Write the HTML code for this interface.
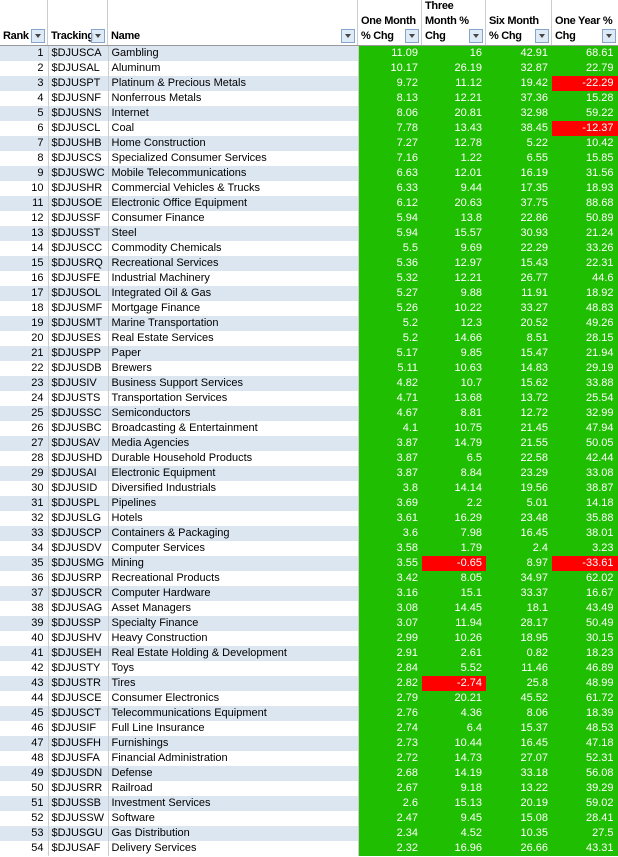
<!DOCTYPE html>
<html><head><style>
*{margin:0;padding:0;box-sizing:border-box}
body{width:618px;height:857px;background:#fff;font-family:"Liberation Sans",Arial,sans-serif;font-size:11px;overflow:hidden;position:relative}
.hd{position:absolute;top:0;left:0;width:618px;height:46px;border-bottom:1px solid #999;background:#fff}
.hc{position:absolute;top:0;height:45px;border-right:1px solid #ccc;font-weight:bold;font-size:11px;line-height:15px;color:#000;letter-spacing:-0.3px}
.hc span{position:absolute;left:3px;bottom:1px;white-space:nowrap}
.dd{position:absolute;right:2px;bottom:2px;width:14px;height:14px;border:1px solid #7a9cc8;background:#dbe8f5;opacity:.9}
.dd:after{content:"";position:absolute;left:3px;top:4px;border-left:3.5px solid transparent;border-right:3.5px solid transparent;border-top:4px solid #333}
table{position:absolute;top:46px;left:0;border-collapse:collapse;table-layout:fixed;width:618px}
td{height:15px;line-height:15px;padding:0 3px;white-space:nowrap;overflow:hidden}
td.r{text-align:right;padding-right:4px;border-right:1px solid #ccc}
td.t{border-right:1px solid #ccc}
td.n{border-right:1px solid #ccc}
td.g{background:#20be00;color:#fff;text-align:right;padding-right:4px}
td.g.e{border-right:1px solid #fff}
td.g b{font-weight:normal;display:block;margin:0 -4px 0 -3px;padding-right:4px}
td.g b.x{background:#f00}
tr:nth-child(odd) td.r,tr:nth-child(odd) td.t,tr:nth-child(odd) td.n{background:#dce6f1}
</style></head><body>
<div class="hd">
<div class="hc" style="left:0;width:48px"><span>Rank</span><div class="dd"></div></div>
<div class="hc" style="left:48px;width:60px"><span>Tracking</span><div class="dd"></div></div>
<div class="hc" style="left:108px;width:250px"><span>Name</span><div class="dd"></div></div>
<div class="hc" style="left:358px;width:64px"><span>One Month<br>% Chg</span><div class="dd" style="background:#dbe8f5"></div></div>
<div class="hc" style="left:422px;width:64px"><span>Three<br>Month %<br>Chg</span><div class="dd"></div></div>
<div class="hc" style="left:486px;width:66px"><span>Six Month<br>% Chg</span><div class="dd"></div></div>
<div class="hc" style="left:552px;width:66px;border-right:0"><span>One Year %<br>Chg</span><div class="dd"></div></div>
</div>
<table>
<colgroup><col style="width:48px"><col style="width:60px"><col style="width:250px"><col style="width:64px"><col style="width:64px"><col style="width:66px"><col style="width:66px"></colgroup>
<tr><td class="r">1</td><td class="t">$DJUSCA</td><td class="n">Gambling</td><td class="g">11.09</td><td class="g">16</td><td class="g">42.91</td><td class="g e">68.61</td></tr>
<tr><td class="r">2</td><td class="t">$DJUSAL</td><td class="n">Aluminum</td><td class="g">10.17</td><td class="g">26.19</td><td class="g">32.87</td><td class="g e">22.79</td></tr>
<tr><td class="r">3</td><td class="t">$DJUSPT</td><td class="n">Platinum &amp; Precious Metals</td><td class="g">9.72</td><td class="g">11.12</td><td class="g">19.42</td><td class="g e"><b class="x">-22.29</b></td></tr>
<tr><td class="r">4</td><td class="t">$DJUSNF</td><td class="n">Nonferrous Metals</td><td class="g">8.13</td><td class="g">12.21</td><td class="g">37.36</td><td class="g e">15.28</td></tr>
<tr><td class="r">5</td><td class="t">$DJUSNS</td><td class="n">Internet</td><td class="g">8.06</td><td class="g">20.81</td><td class="g">32.98</td><td class="g e">59.22</td></tr>
<tr><td class="r">6</td><td class="t">$DJUSCL</td><td class="n">Coal</td><td class="g">7.78</td><td class="g">13.43</td><td class="g">38.45</td><td class="g e"><b class="x">-12.37</b></td></tr>
<tr><td class="r">7</td><td class="t">$DJUSHB</td><td class="n">Home Construction</td><td class="g">7.27</td><td class="g">12.78</td><td class="g">5.22</td><td class="g e">10.42</td></tr>
<tr><td class="r">8</td><td class="t">$DJUSCS</td><td class="n">Specialized Consumer Services</td><td class="g">7.16</td><td class="g">1.22</td><td class="g">6.55</td><td class="g e">15.85</td></tr>
<tr><td class="r">9</td><td class="t">$DJUSWC</td><td class="n">Mobile Telecommunications</td><td class="g">6.63</td><td class="g">12.01</td><td class="g">16.19</td><td class="g e">31.56</td></tr>
<tr><td class="r">10</td><td class="t">$DJUSHR</td><td class="n">Commercial Vehicles &amp; Trucks</td><td class="g">6.33</td><td class="g">9.44</td><td class="g">17.35</td><td class="g e">18.93</td></tr>
<tr><td class="r">11</td><td class="t">$DJUSOE</td><td class="n">Electronic Office Equipment</td><td class="g">6.12</td><td class="g">20.63</td><td class="g">37.75</td><td class="g e">88.68</td></tr>
<tr><td class="r">12</td><td class="t">$DJUSSF</td><td class="n">Consumer Finance</td><td class="g">5.94</td><td class="g">13.8</td><td class="g">22.86</td><td class="g e">50.89</td></tr>
<tr><td class="r">13</td><td class="t">$DJUSST</td><td class="n">Steel</td><td class="g">5.94</td><td class="g">15.57</td><td class="g">30.93</td><td class="g e">21.24</td></tr>
<tr><td class="r">14</td><td class="t">$DJUSCC</td><td class="n">Commodity Chemicals</td><td class="g">5.5</td><td class="g">9.69</td><td class="g">22.29</td><td class="g e">33.26</td></tr>
<tr><td class="r">15</td><td class="t">$DJUSRQ</td><td class="n">Recreational Services</td><td class="g">5.36</td><td class="g">12.97</td><td class="g">15.43</td><td class="g e">22.31</td></tr>
<tr><td class="r">16</td><td class="t">$DJUSFE</td><td class="n">Industrial Machinery</td><td class="g">5.32</td><td class="g">12.21</td><td class="g">26.77</td><td class="g e">44.6</td></tr>
<tr><td class="r">17</td><td class="t">$DJUSOL</td><td class="n">Integrated Oil &amp; Gas</td><td class="g">5.27</td><td class="g">9.88</td><td class="g">11.91</td><td class="g e">18.92</td></tr>
<tr><td class="r">18</td><td class="t">$DJUSMF</td><td class="n">Mortgage Finance</td><td class="g">5.26</td><td class="g">10.22</td><td class="g">33.27</td><td class="g e">48.83</td></tr>
<tr><td class="r">19</td><td class="t">$DJUSMT</td><td class="n">Marine Transportation</td><td class="g">5.2</td><td class="g">12.3</td><td class="g">20.52</td><td class="g e">49.26</td></tr>
<tr><td class="r">20</td><td class="t">$DJUSES</td><td class="n">Real Estate Services</td><td class="g">5.2</td><td class="g">14.66</td><td class="g">8.51</td><td class="g e">28.15</td></tr>
<tr><td class="r">21</td><td class="t">$DJUSPP</td><td class="n">Paper</td><td class="g">5.17</td><td class="g">9.85</td><td class="g">15.47</td><td class="g e">21.94</td></tr>
<tr><td class="r">22</td><td class="t">$DJUSDB</td><td class="n">Brewers</td><td class="g">5.11</td><td class="g">10.63</td><td class="g">14.83</td><td class="g e">29.19</td></tr>
<tr><td class="r">23</td><td class="t">$DJUSIV</td><td class="n">Business Support Services</td><td class="g">4.82</td><td class="g">10.7</td><td class="g">15.62</td><td class="g e">33.88</td></tr>
<tr><td class="r">24</td><td class="t">$DJUSTS</td><td class="n">Transportation Services</td><td class="g">4.71</td><td class="g">13.68</td><td class="g">13.72</td><td class="g e">25.54</td></tr>
<tr><td class="r">25</td><td class="t">$DJUSSC</td><td class="n">Semiconductors</td><td class="g">4.67</td><td class="g">8.81</td><td class="g">12.72</td><td class="g e">32.99</td></tr>
<tr><td class="r">26</td><td class="t">$DJUSBC</td><td class="n">Broadcasting &amp; Entertainment</td><td class="g">4.1</td><td class="g">10.75</td><td class="g">21.45</td><td class="g e">47.94</td></tr>
<tr><td class="r">27</td><td class="t">$DJUSAV</td><td class="n">Media Agencies</td><td class="g">3.87</td><td class="g">14.79</td><td class="g">21.55</td><td class="g e">50.05</td></tr>
<tr><td class="r">28</td><td class="t">$DJUSHD</td><td class="n">Durable Household Products</td><td class="g">3.87</td><td class="g">6.5</td><td class="g">22.58</td><td class="g e">42.44</td></tr>
<tr><td class="r">29</td><td class="t">$DJUSAI</td><td class="n">Electronic Equipment</td><td class="g">3.87</td><td class="g">8.84</td><td class="g">23.29</td><td class="g e">33.08</td></tr>
<tr><td class="r">30</td><td class="t">$DJUSID</td><td class="n">Diversified Industrials</td><td class="g">3.8</td><td class="g">14.14</td><td class="g">19.56</td><td class="g e">38.87</td></tr>
<tr><td class="r">31</td><td class="t">$DJUSPL</td><td class="n">Pipelines</td><td class="g">3.69</td><td class="g">2.2</td><td class="g">5.01</td><td class="g e">14.18</td></tr>
<tr><td class="r">32</td><td class="t">$DJUSLG</td><td class="n">Hotels</td><td class="g">3.61</td><td class="g">16.29</td><td class="g">23.48</td><td class="g e">35.88</td></tr>
<tr><td class="r">33</td><td class="t">$DJUSCP</td><td class="n">Containers &amp; Packaging</td><td class="g">3.6</td><td class="g">7.98</td><td class="g">16.45</td><td class="g e">38.01</td></tr>
<tr><td class="r">34</td><td class="t">$DJUSDV</td><td class="n">Computer Services</td><td class="g">3.58</td><td class="g">1.79</td><td class="g">2.4</td><td class="g e">3.23</td></tr>
<tr><td class="r">35</td><td class="t">$DJUSMG</td><td class="n">Mining</td><td class="g">3.55</td><td class="g"><b class="x">-0.65</b></td><td class="g">8.97</td><td class="g e"><b class="x">-33.61</b></td></tr>
<tr><td class="r">36</td><td class="t">$DJUSRP</td><td class="n">Recreational Products</td><td class="g">3.42</td><td class="g">8.05</td><td class="g">34.97</td><td class="g e">62.02</td></tr>
<tr><td class="r">37</td><td class="t">$DJUSCR</td><td class="n">Computer Hardware</td><td class="g">3.16</td><td class="g">15.1</td><td class="g">33.37</td><td class="g e">16.67</td></tr>
<tr><td class="r">38</td><td class="t">$DJUSAG</td><td class="n">Asset Managers</td><td class="g">3.08</td><td class="g">14.45</td><td class="g">18.1</td><td class="g e">43.49</td></tr>
<tr><td class="r">39</td><td class="t">$DJUSSP</td><td class="n">Specialty Finance</td><td class="g">3.07</td><td class="g">11.94</td><td class="g">28.17</td><td class="g e">50.49</td></tr>
<tr><td class="r">40</td><td class="t">$DJUSHV</td><td class="n">Heavy Construction</td><td class="g">2.99</td><td class="g">10.26</td><td class="g">18.95</td><td class="g e">30.15</td></tr>
<tr><td class="r">41</td><td class="t">$DJUSEH</td><td class="n">Real Estate Holding &amp; Development</td><td class="g">2.91</td><td class="g">2.61</td><td class="g">0.82</td><td class="g e">18.23</td></tr>
<tr><td class="r">42</td><td class="t">$DJUSTY</td><td class="n">Toys</td><td class="g">2.84</td><td class="g">5.52</td><td class="g">11.46</td><td class="g e">46.89</td></tr>
<tr><td class="r">43</td><td class="t">$DJUSTR</td><td class="n">Tires</td><td class="g">2.82</td><td class="g"><b class="x">-2.74</b></td><td class="g">25.8</td><td class="g e">48.99</td></tr>
<tr><td class="r">44</td><td class="t">$DJUSCE</td><td class="n">Consumer Electronics</td><td class="g">2.79</td><td class="g">20.21</td><td class="g">45.52</td><td class="g e">61.72</td></tr>
<tr><td class="r">45</td><td class="t">$DJUSCT</td><td class="n">Telecommunications Equipment</td><td class="g">2.76</td><td class="g">4.36</td><td class="g">8.06</td><td class="g e">18.39</td></tr>
<tr><td class="r">46</td><td class="t">$DJUSIF</td><td class="n">Full Line Insurance</td><td class="g">2.74</td><td class="g">6.4</td><td class="g">15.37</td><td class="g e">48.53</td></tr>
<tr><td class="r">47</td><td class="t">$DJUSFH</td><td class="n">Furnishings</td><td class="g">2.73</td><td class="g">10.44</td><td class="g">16.45</td><td class="g e">47.18</td></tr>
<tr><td class="r">48</td><td class="t">$DJUSFA</td><td class="n">Financial Administration</td><td class="g">2.72</td><td class="g">14.73</td><td class="g">27.07</td><td class="g e">52.31</td></tr>
<tr><td class="r">49</td><td class="t">$DJUSDN</td><td class="n">Defense</td><td class="g">2.68</td><td class="g">14.19</td><td class="g">33.18</td><td class="g e">56.08</td></tr>
<tr><td class="r">50</td><td class="t">$DJUSRR</td><td class="n">Railroad</td><td class="g">2.67</td><td class="g">9.18</td><td class="g">13.22</td><td class="g e">39.29</td></tr>
<tr><td class="r">51</td><td class="t">$DJUSSB</td><td class="n">Investment Services</td><td class="g">2.6</td><td class="g">15.13</td><td class="g">20.19</td><td class="g e">59.02</td></tr>
<tr><td class="r">52</td><td class="t">$DJUSSW</td><td class="n">Software</td><td class="g">2.47</td><td class="g">9.45</td><td class="g">15.08</td><td class="g e">28.41</td></tr>
<tr><td class="r">53</td><td class="t">$DJUSGU</td><td class="n">Gas Distribution</td><td class="g">2.34</td><td class="g">4.52</td><td class="g">10.35</td><td class="g e">27.5</td></tr>
<tr><td class="r">54</td><td class="t">$DJUSAF</td><td class="n">Delivery Services</td><td class="g">2.32</td><td class="g">16.96</td><td class="g">26.66</td><td class="g e">43.31</td></tr>
</table>
</body></html>
